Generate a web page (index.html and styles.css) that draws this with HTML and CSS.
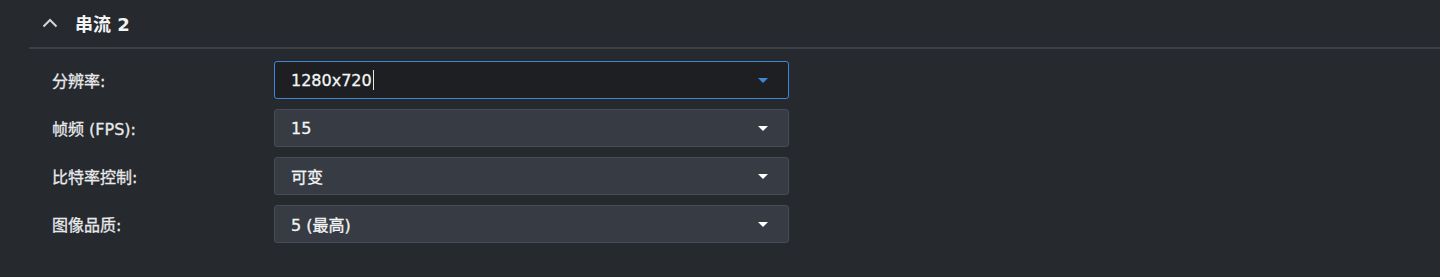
FILE: index.html
```html
<!DOCTYPE html>
<html lang="zh-CN">
<head>
<meta charset="utf-8">
<link rel="stylesheet" href="styles.css">
</head>
<body>
<div class="panel">
  <div class="section-head">
    <svg class="chev" width="16" height="10" viewBox="0 0 16 10"><path d="M1.5 8.5 L8 2 L14.5 8.5" fill="none" stroke="#d4d6da" stroke-width="2"/></svg>
    <span class="title">串流 2</span>
  </div>
  <div class="form">
    <div class="row">
      <label class="lbl">分辨率:</label>
      <div class="select focused"><span class="val">1280x720<span class="caret"></span></span><span class="arrow"></span></div>
    </div>
    <div class="row">
      <label class="lbl">帧频 (FPS):</label>
      <div class="select"><span class="val">15</span><span class="arrow"></span></div>
    </div>
    <div class="row">
      <label class="lbl">比特率控制:</label>
      <div class="select"><span class="val">可变</span><span class="arrow"></span></div>
    </div>
    <div class="row">
      <label class="lbl">图像品质:</label>
      <div class="select"><span class="val">5 (最高)</span><span class="arrow"></span></div>
    </div>
  </div>
</div>
</body>
</html>
```

FILE: styles.css
```css
html, body {
  margin: 0;
  padding: 0;
  background: #26292e;
  height: 277px;
  overflow: hidden;
}
body {
  font-family: "DejaVu Sans", "Noto Sans CJK SC", sans-serif;
  color: #e6e7e9;
}
.panel {
  padding-left: 29px;
}
.section-head {
  display: flex;
  align-items: center;
  border-bottom: 2px solid #3c3f45;
  padding-left: 13px;
  box-sizing: border-box;
  height: 49px;
}
.chev {
  margin-right: 17px;
  margin-top: -1px;
}
.title {
  font-size: 18px;
  font-weight: 700;
  color: #f2f3f4;
  margin-top: -2px;
}
.form {
  padding-top: 12px;
  display: flex;
  flex-direction: column;
  gap: 10px;
}
.row {
  display: flex;
  align-items: center;
  height: 38px;
}
.lbl {
  width: 222px;
  padding-left: 23px;
  font-size: 16px;
  color: #e8e9eb;
  -webkit-text-stroke: 0.3px #e8e9eb;
}
.select {
  position: relative;
  width: 515px;
  height: 38px;
  box-sizing: border-box;
  border: 1px solid #474b53;
  border-radius: 3px;
  background: #373b43;
  display: flex;
  align-items: center;
  padding-left: 16px;
  font-size: 16px;
  color: #f3f4f5;
  -webkit-text-stroke: 0.3px #f3f4f5;
}
.select.focused {
  background: #1d1f23;
  border-color: #3d86d8;
}
.val {
  flex: 1;
  display: flex;
  align-items: center;
}
.caret {
  display: inline-block;
  width: 1px;
  height: 20px;
  background: #e6e7e9;
  margin-left: 1px;
}
.arrow {
  width: 0;
  height: 0;
  border-left: 5px solid transparent;
  border-right: 5px solid transparent;
  border-top: 5px solid #ffffff;
  margin-right: 20px;
}
.focused .arrow {
  border-top-color: #3d86d8;
}
```
